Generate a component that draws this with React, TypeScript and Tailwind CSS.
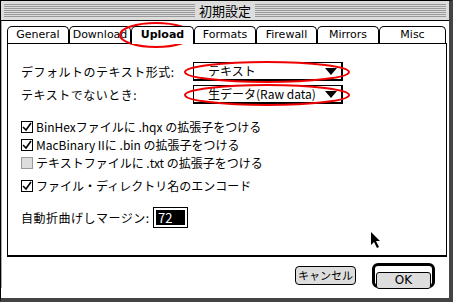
import React from "react";

const tabs = [
  { name: "General", w: "w-[62px]" },
  { name: "Download", w: "w-[62px]" },
  { name: "Upload", w: "w-[63px]", active: true },
  { name: "Formats", w: "w-[62px]" },
  { name: "Firewall", w: "w-[61px]" },
  { name: "Mirrors", w: "w-[62px]" },
  { name: "Misc", w: "w-[67px]" },
];

const checks = [
  { label: "BinHexファイルに .hqx の拡張子をつける", on: true },
  { label: "MacBinary IIに .bin の拡張子をつける", on: true },
  { label: "テキストファイルに .txt の拡張子をつける", on: false },
];

function CheckBox({ on }: { on: boolean }) {
  return (
    <span
      className={
        on
          ? "w-[12px] h-[12px] border border-black bg-white flex items-center justify-center shrink-0"
          : "w-[12px] h-[12px] border border-[#999] bg-[#ddd] shrink-0"
      }
    >
      {on && (
        <svg width="10" height="10" viewBox="0 0 10 10">
          <path d="M1 5 L4 8 L9 1" stroke="#000" strokeWidth="1.6" fill="none" />
        </svg>
      )}
    </span>
  );
}

function Popup({ text }: { text: string }) {
  return (
    <div className="w-[150px] h-[19px] border border-black border-r-2 border-b-2 bg-white flex items-center pl-[14px] pr-[4px]">
      <span className="flex-1 text-[12px] leading-none whitespace-nowrap">{text}</span>
      <svg width="12" height="7" viewBox="0 0 12 7">
        <path d="M0 0 H12 L6 7 Z" fill="#000" />
      </svg>
    </div>
  );
}

export default function App() {
  return (
    <div
      className="relative w-[453px] h-[302px] bg-white border-l border-t border-black border-r-[4px] border-r-[#444] border-b-[4px] border-b-[#444] overflow-hidden text-black"
      style={{ fontFamily: '"DejaVu Sans", "Noto Sans CJK JP", sans-serif' }}
    >
      {/* title bar */}
      <div className="h-[20px] bg-[#ddd] border-b border-black px-[3px] py-[3px] flex items-center">
        <div className="flex-1 h-[13px] bg-[repeating-linear-gradient(to_bottom,#999_0px,#999_1px,#ddd_1px,#ddd_2px)]" />
        <span className="px-[4px] text-[13px] leading-none" style={{ fontFamily: '"Noto Sans CJK JP", sans-serif' }}>
          初期設定
        </span>
        <div className="flex-1 h-[13px] bg-[repeating-linear-gradient(to_bottom,#999_0px,#999_1px,#ddd_1px,#ddd_2px)]" />
      </div>

      <div className="pl-[5px] pt-[5px] border-l border-[#aaa]">
        {/* tabs */}
        <div className="flex h-[17px]">
          {tabs.map((t) => (
            <div
              key={t.name}
              className={
                t.active
                  ? `${t.w} relative z-10 h-[18px] -mb-px bg-white border border-black border-b-0 rounded-t-[5px] flex items-center justify-center text-[11px] font-bold`
                  : `${t.w} bg-white border border-black border-b-0 rounded-t-[5px] flex items-center justify-center text-[11px]`
              }
            >
              {t.name}
            </div>
          ))}
        </div>

        {/* panel */}
        <div
          className="w-[440px] h-[214px] border border-black border-b-2 pl-[13px] pt-[18px]"
          style={{ fontFamily: '"Noto Sans CJK JP", sans-serif' }}
        >
          <div className="flex items-center h-[19px] text-[12px]">
            <span className="w-[172px] tracking-[0.5px]">デフォルトのテキスト形式:</span>
            <Popup text="テキスト" />
          </div>
          <div className="flex items-center h-[19px] mt-[4px] text-[12px]">
            <span className="w-[172px] tracking-[0.5px]">テキストでないとき:</span>
            <Popup text="生データ(Raw data)" />
          </div>

          <div className="mt-[16px] flex flex-col gap-[5px]">
            {checks.map((c) => (
              <div key={c.label} className="flex items-center gap-[3px] h-[13px] text-[12px]">
                <CheckBox on={c.on} />
                <span>{c.label}</span>
              </div>
            ))}
          </div>
          <div className="mt-[10px] flex items-center gap-[3px] h-[13px] text-[12px]">
            <CheckBox on />
            <span>ファイル・ディレクトリ名のエンコード</span>
          </div>

          <div className="mt-[15px] flex items-center text-[12px]">
            <span className="w-[132px] tracking-[0.5px]">自動折曲げしマージン:</span>
            <div className="w-[35px] h-[21px] border border-black p-[2px] bg-white">
              <div className="w-full h-full bg-black text-white text-[13px] leading-[15px] pl-[2px]">72</div>
            </div>
          </div>
        </div>

        {/* buttons */}
        <div className="flex justify-end items-center gap-[16px] pr-[14px] mt-[6px]">
          <button
            className="w-[61px] h-[19px] rounded-[4px] border border-black bg-[#ddd] text-[11px] leading-none whitespace-nowrap px-0"
            style={{ fontFamily: '"Noto Sans CJK JP", sans-serif' }}
          >
            キャンセル
          </button>
          <div className="w-[63px] h-[25px] rounded-[6px] border-[3px] border-black p-[1px] bg-white">
            <button className="w-full h-full rounded-[3px] border border-black bg-[#ddd] text-[12px] leading-none">
              OK
            </button>
          </div>
        </div>
      </div>

      {/* annotation ellipses */}
      <svg className="absolute left-0 top-0 pointer-events-none" width="453" height="302">
        <ellipse cx="155" cy="34" rx="36" ry="12" stroke="#e00" strokeWidth="2" fill="none" />
        <ellipse cx="266" cy="71" rx="82" ry="10" stroke="#e00" strokeWidth="2" fill="none" />
        <ellipse cx="266" cy="94" rx="82" ry="10" stroke="#e00" strokeWidth="2" fill="none" />
        <path d="M370 231 L370 244 L373 241 L376 247 L378 246 L375 240 L379 240 Z" fill="#000" />
      </svg>
    </div>
  );
}
